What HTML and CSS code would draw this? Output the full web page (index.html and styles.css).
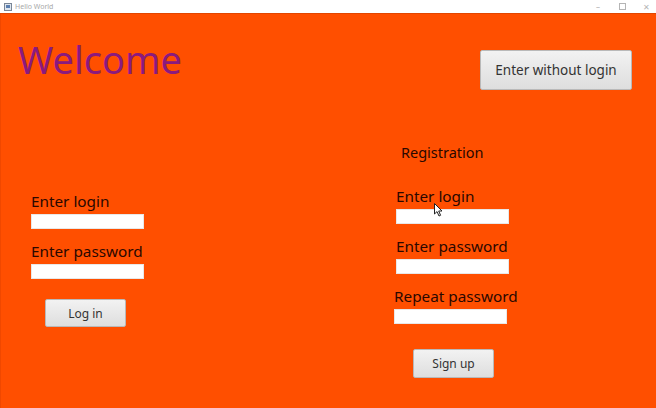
FILE: index.html
```html
<!DOCTYPE html>
<html>
<head>
<meta charset="utf-8">
<title>Hello World</title>
<link rel="stylesheet" href="styles.css">
</head>
<body>
<div class="window">
  <div class="titlebar">
    <div class="app">
      <svg class="app-icon" width="8" height="8" viewBox="0 0 8 8"><rect x="0.5" y="0.5" width="7" height="7" fill="#dfe6ee" stroke="#7a8696"/><rect x="2" y="2" width="4" height="3" fill="#5b7fb0"/></svg>
      <span class="app-title">Hello World</span>
    </div>
    <div class="controls">
      <span class="ctl">&#8211;</span>
      <span class="ctl"><svg width="7" height="7" viewBox="0 0 7 7"><rect x="0.5" y="0.5" width="6" height="6" fill="none" stroke="#b5b5b5"/></svg></span>
      <span class="ctl">&#10005;</span>
    </div>
  </div>
  <div class="stage">
    <div class="half left">
      <h1 class="welcome">Welcome</h1>
      <div class="form">
        <label class="label">Enter login</label>
        <input class="field" type="text">
        <label class="label">Enter password</label>
        <input class="field" type="password">
        <button class="btn btn-login">Log in</button>
      </div>
    </div>
    <div class="half right">
      <button class="btn btn-guest">Enter without login</button>
      <div class="form">
        <div class="heading">Registration</div>
        <label class="label">Enter login</label>
        <input class="field" type="text">
        <label class="label">Enter password</label>
        <input class="field" type="password">
        <label class="label shift">Repeat password</label>
        <input class="field shift" type="password">
        <button class="btn btn-signup">Sign up</button>
      </div>
      <svg class="cursor" width="10" height="14" viewBox="0 0 10 14"><path d="M0.5 0.5 L0.5 11 L3 8.6 L5 13 L6.6 12.3 L4.7 8 L8 8 Z" fill="#fff" stroke="#222" stroke-width="1"/></svg>
    </div>
  </div>
</div>
</body>
</html>
```

FILE: styles.css
```css
* { box-sizing: border-box; }
html, body { margin: 0; padding: 0; }
body {
  width: 656px;
  height: 408px;
  overflow: hidden;
  font-family: "Noto Sans", "Open Sans", sans-serif;
  background: #ff4f00;
}
.window {
  width: 656px;
  height: 408px;
  display: flex;
  flex-direction: column;
}
.titlebar {
  height: 14px;
  background: #ffffff;
  display: flex;
  align-items: center;
  justify-content: space-between;
  padding: 0 6px 0 4px;
  border-bottom: 1px solid #e24600;
}
.app { display: flex; align-items: center; gap: 3px; }
.app-icon { display: block; }
.app-title { font-size: 7px; color: #a8a8a8; line-height: 10px; }
.controls { display: flex; align-items: center; gap: 16px; }
.ctl {
  width: 8px;
  font-size: 8px;
  line-height: 10px;
  color: #b5b5b5;
  display: flex;
  justify-content: center;
}
.stage {
  flex: 1;
  display: flex;
  background: #ff4f00;
  border-left: 1px solid #f04800;
}
.half { display: flex; flex-direction: column; }
.left { width: 393px; padding-left: 17px; }
.right { flex: 1; position: relative; }
.welcome {
  margin: 23px 0 0 0;
  font-weight: 400;
  font-size: 38px;
  line-height: 44px;
  color: #8b1a7e;
}
.form { display: flex; flex-direction: column; align-items: flex-start; }
.left .form { margin: 110px 0 0 13px; }
.right .form { margin-top: 52px; padding-left: 2px; }
.label {
  font-size: 15.3px;
  line-height: 20px;
  color: #2a0800;
  margin-bottom: 3px;
}
.field {
  width: 113px;
  height: 15px;
  border: 1px solid #e8e8e8;
  background: #ffffff;
  margin: 0 0 12px 0;
  padding: 0;
}
.shift { margin-left: -2px; }
.heading {
  font-size: 14.5px;
  line-height: 20px;
  color: #2a0800;
  margin: 0 0 24px 5px;
}
.btn {
  font-family: "Noto Sans", "Open Sans", sans-serif;
  color: #333333;
  background: linear-gradient(#f2f2f2, #dedede);
  border: 1px solid #b9b9b9;
  border-radius: 2px;
  padding: 0;
}
.btn-guest {
  align-self: flex-end;
  margin: 36px 24px 0 0;
  width: 152px;
  height: 40px;
  font-size: 13.5px;
}
.btn-login {
  margin: 8px 0 0 14px;
  width: 81px;
  height: 28px;
  font-size: 12px;
}
.btn-signup {
  margin: 13px 0 0 17px;
  width: 81px;
  height: 29px;
  font-size: 12px;
}
.cursor {
  position: absolute;
  left: 40px;
  top: 189px;
}
```
